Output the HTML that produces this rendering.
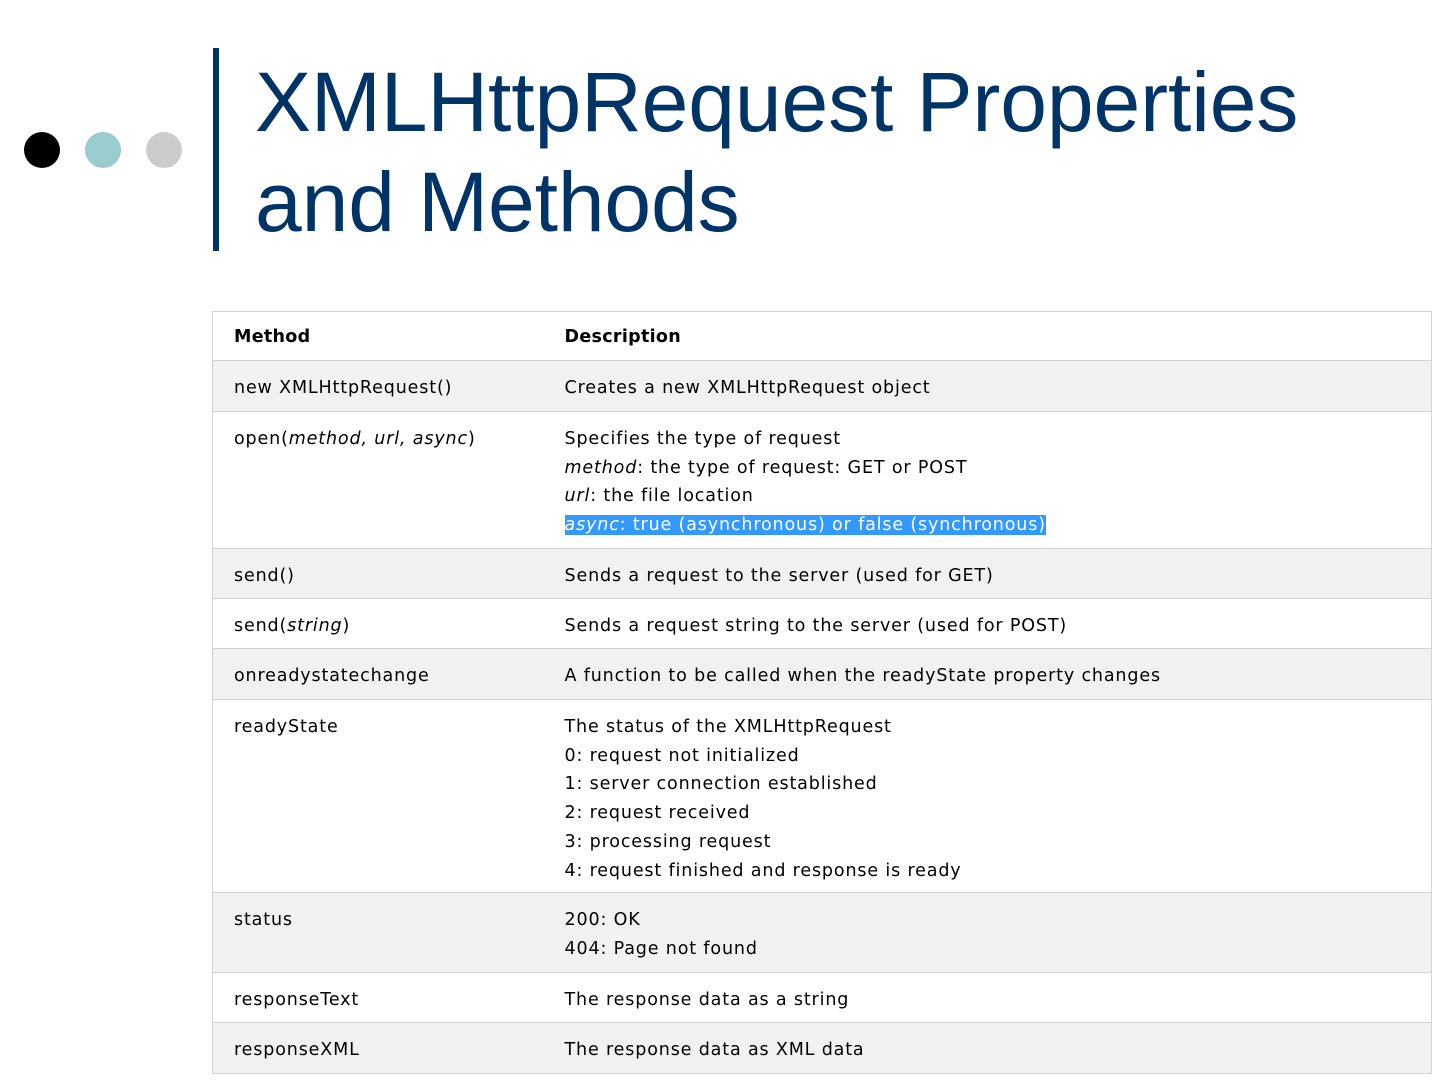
<!DOCTYPE html>
<html><head><meta charset="utf-8"><style>
*{margin:0;padding:0;box-sizing:border-box}
body{width:1440px;height:1080px;background:#fff;position:relative;overflow:hidden;font-family:"DejaVu Sans","Liberation Sans",sans-serif}
.dot{position:absolute;width:36px;height:36px;border-radius:50%;top:132px}
.bar{position:absolute;left:213px;top:48px;width:6px;height:203px;background:#003366}
h1{position:absolute;left:255px;top:52px;font:400 84px/100px "Liberation Sans",sans-serif;color:#003366;white-space:nowrap;letter-spacing:-0.1px}
table{position:absolute;left:212px;top:311px;width:1220px;border-collapse:collapse;border:1px solid #d4d4d4;font-size:17.5px;color:#000;letter-spacing:0.85px}
td,th{border-top:1px solid #d4d4d4;text-align:left;vertical-align:top;padding:13px 0 0 21px;line-height:28.7px}
th{font-weight:bold;height:49px;padding-top:11px;letter-spacing:0.3px}
td:first-child,th:first-child{width:330px}
td:last-child,th:last-child{padding-left:22px}
tr.g{background:#f1f1f1}
.hl{background:#3399ff;color:#fff}
</style></head><body>
<div class="dot" style="left:24px;background:#000"></div>
<div class="dot" style="left:85px;background:#99cccc"></div>
<div class="dot" style="left:146px;background:#cccccc"></div>
<div class="bar"></div>
<h1>XMLHttpRequest Properties<br>and Methods</h1>
<table>
<tr><th>Method</th><th>Description</th></tr>
<tr class="g" style="height:51px"><td>new XMLHttpRequest()</td><td>Creates a new XMLHttpRequest object</td></tr>
<tr style="height:137px"><td>open(<i>method, url, async</i>)</td><td>Specifies the type of request<br><i>method</i>: the type of request: GET or POST<br><i>url</i>: the file location<br><span class="hl"><i>async</i>: true (asynchronous) or false (synchronous)</span></td></tr>
<tr class="g" style="height:50px"><td>send()</td><td>Sends a request to the server (used for GET)</td></tr>
<tr style="height:50px"><td>send(<i>string</i>)</td><td>Sends a request string to the server (used for POST)</td></tr>
<tr class="g" style="height:51px"><td>onreadystatechange</td><td>A function to be called when the readyState property changes</td></tr>
<tr style="height:193px"><td>readyState</td><td>The status of the XMLHttpRequest<br>0: request not initialized<br>1: server connection established<br>2: request received<br>3: processing request<br>4: request finished and response is ready</td></tr>
<tr class="g" style="height:80px"><td>status</td><td>200: OK<br>404: Page not found</td></tr>
<tr style="height:50px"><td>responseText</td><td>The response data as a string</td></tr>
<tr class="g" style="height:51px"><td>responseXML</td><td>The response data as XML data</td></tr>
</table>
</body></html>
